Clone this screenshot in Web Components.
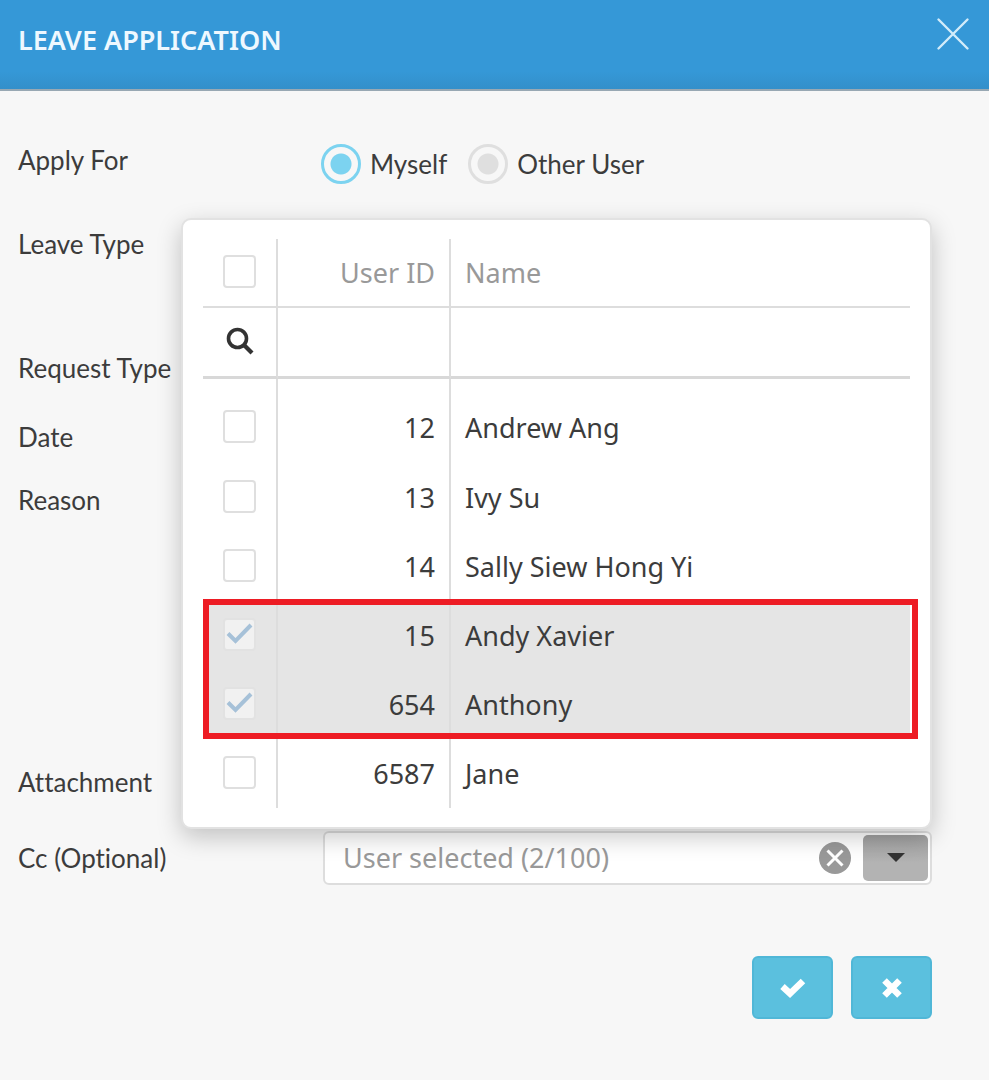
<!DOCTYPE html>
<html lang="en">
<head>
  <meta charset="UTF-8">
  <meta name="viewport" content="width=device-width, initial-scale=1.0">
  <title>Leave Application</title>
  <style>
    :root {
      --header: #3598d7;
      --page: #f7f7f7;
      --text: #3c3c3c;
      --muted: #999999;
      --line: #dddddd;
      --accent: #7cd3f0;
      --button: #5bc0de;
      --red: #ed1c24;
    }

    body {
      margin: 0;
      min-height: 100vh;
      background-color: var(--page);
      color: var(--text);
      font-family: Lato, "Liberation Sans", sans-serif;
      font-size: 26px;
      line-height: 32px;
      font-variant-ligatures: none;
    }
  </style>
</head>
<body>
  <leave-application></leave-application>

  <script>
    const define = (name, html, setup) => {
      const template = document.createElement("template");
      template.innerHTML = html;
      customElements.define(name, class extends HTMLElement {
        constructor() {
          super();
          this.attachShadow({ mode: "open" }).appendChild(template.content.cloneNode(true));
        }
        connectedCallback() {
          if (setup) setup(this, this.shadowRoot);
        }
      });
    };

    define("dialog-header", `
      <header>
        <h1><slot></slot></h1>
        <button type="button" aria-label="Close">
          <svg width="34" height="34" viewBox="0 0 34 34" fill="none" stroke="#d3ecfa" stroke-width="2.4" stroke-linecap="round">
            <path d="M2.500 2.500 31.500 31.500M31.500 2.500 2.500 31.500"/>
          </svg>
        </button>
      </header>
      <style>
        :host {
          display: block;
        }

        header {
          display: flex;
          justify-content: space-between;
          align-items: flex-start;
          box-sizing: border-box;
          min-height: 91px;
          padding: 17px 19px 0 18px;
          background: linear-gradient(to bottom, var(--header) 80%, #338fca);
          border-bottom: 2px solid #98a8b3;
        }

        h1 {
          margin: 7px 0 0;
          color: #eef8ff;
          font: 600 27px/32px "Noto Sans", sans-serif;
        }

        button {
          display: grid;
          padding: 0;
          border: 0;
          background: none;
          cursor: pointer;
        }
      </style>
    `);

    define("form-row", `
      <slot name="label"></slot>
      <div><slot></slot></div>
      <style>
        :host {
          display: grid;
          grid-template-columns: 305px 1fr;
          align-items: start;
        }

        :host([center]) {
          align-items: center;
        }
      </style>
    `);

    define("radio-option", `
      <label>
        <input type="radio">
        <slot></slot>
      </label>
      <style>
        :host {
          display: block;
        }

        label {
          display: flex;
          align-items: center;
          gap: 9px;
          cursor: pointer;
        }

        input {
          appearance: none;
          flex: none;
          width: 40px;
          height: 40px;
          margin: 0;
          border: 3px solid #dfdfdf;
          border-radius: 50%;
          background: radial-gradient(circle, #dfdfdf 10px, transparent 11px);
        }

        input:checked {
          border-color: var(--accent);
          background: radial-gradient(circle, var(--accent) 10px, transparent 11px);
        }
      </style>
    `, (host, root) => {
      root.querySelector("input").checked = host.hasAttribute("checked");
    });

    define("user-table", `
      <table>
        <thead>
          <tr>
            <th><input type="checkbox" aria-label="Select all"></th>
            <th>User ID</th>
            <th>Name</th>
          </tr>
          <tr class="filter">
            <td>
              <svg width="28" height="28" viewBox="0 0 28 28" fill="none" stroke="#333">
                <circle cx="11.500" cy="11.500" r="9" stroke-width="3.600"/>
                <path d="M18 18 26 26" stroke-width="4.200"/>
              </svg>
            </td>
            <td></td>
            <td></td>
          </tr>
        </thead>
        <tbody></tbody>
      </table>
      <div class="mark"></div>
      <style>
        :host {
          display: block;
          position: relative;
          font: 27px/32px "Noto Sans", sans-serif;
        }

        table {
          width: 100%;
          table-layout: fixed;
          border-collapse: separate;
          border-spacing: 0;
        }

        th,
        td {
          box-sizing: border-box;
          height: 69px;
          padding: 0 14px;
          text-align: left;
          font-weight: 400;
        }

        th:nth-child(1),
        td:nth-child(1) {
          width: 75px;
          padding: 0 0 2px;
          text-align: center;
          border-right: 2px solid var(--line);
        }

        th:nth-child(2),
        td:nth-child(2) {
          width: 173px;
          text-align: right;
          border-right: 2px solid var(--line);
        }

        th {
          color: var(--muted);
          border-bottom: 2px solid var(--line);
        }

        .filter td {
          height: 71px;
          border-bottom: 3px solid #d8d8d8;
        }

        svg {
          display: block;
          margin: 0 auto;
        }

        tbody tr:first-child td {
          height: 84px;
          padding-top: 14px;
        }

        tbody tr:first-child td:first-child {
          padding-top: 13px;
        }

        .selected {
          background-color: #e5e5e5;
        }

        input {
          appearance: none;
          display: block;
          box-sizing: border-box;
          width: 33px;
          height: 33px;
          margin: 0 auto;
          border: 2px solid #dfdfdf;
          border-radius: 4px;
          background-color: #fff;
        }

        input:checked {
          border-color: #e2e2e2;
          background: #f1f1f1 url("data:image/svg+xml,%3Csvg xmlns='http://www.w3.org/2000/svg' viewBox='0 0 29 29' fill='none' stroke='%23a6c1d8' stroke-width='4'%3E%3Cpath d='M3 13.500 10.500 21 26 5'/%3E%3C/svg%3E") center / 29px 29px no-repeat;
        }

        .mark {
          position: absolute;
          left: 0;
          right: -8px;
          bottom: 69px;
          height: 140px;
          box-sizing: border-box;
          border: 6px solid var(--red);
          pointer-events: none;
        }
      </style>
    `, (host, root) => {
      const users = [
        [12, "Andrew Ang"],
        [13, "Ivy Su"],
        [14, "Sally Siew Hong Yi"],
        [15, "Andy Xavier", true],
        [654, "Anthony", true],
        [6587, "Jane"]
      ];
      root.querySelector("tbody").innerHTML = users.map(([id, name, selected]) => `
        <tr class="${selected ? "selected" : ""}">
          <td><input type="checkbox" aria-label="${name}" ${selected ? "checked" : ""}></td>
          <td>${id}</td>
          <td>${name}</td>
        </tr>`).join("");
      root.querySelector("tbody").addEventListener("change", (event) => {
        event.target.closest("tr").classList.toggle("selected", event.target.checked);
      });
    });

    define("user-picker", `
      <slot></slot>
      <button type="button" class="clear" aria-label="Clear">
        <svg width="32" height="32" viewBox="0 0 32 32" fill="none">
          <circle cx="16" cy="16" r="16" fill="#999"/>
          <path d="M8.500 8.500 23.500 23.500M23.500 8.500 8.500 23.500" stroke="#fff" stroke-width="3"/>
        </svg>
      </button>
      <button type="button" class="toggle" aria-label="Show users">
        <svg width="18" height="10" viewBox="0 0 18 10"><path d="M0 0H18L9 9Z" fill="#333"/></svg>
      </button>
      <div class="popup"><user-table></user-table></div>
      <style>
        :host {
          display: flex;
          align-items: center;
          position: relative;
          box-sizing: border-box;
          height: 54px;
          padding: 2px;
          border: 2px solid var(--line);
          border-radius: 6px;
          background-color: #fff;
        }

        ::slotted(input) {
          flex: 1;
          min-width: 0;
          padding: 0 16px;
          border: 0;
          outline: 0;
          background: none;
          color: var(--muted);
          font: 27px/32px "Noto Sans", sans-serif;
        }

        button {
          display: grid;
          place-items: center;
          padding: 0;
          border: 0;
          background: none;
          cursor: pointer;
        }

        .clear {
          margin-right: 12px;
        }

        .toggle {
          width: 65px;
          height: 46px;
          border-radius: 5px;
          background: linear-gradient(to bottom, #a0a0a0, #b3b3b3 60%);
        }

        .popup {
          position: absolute;
          left: -144px;
          right: -2px;
          bottom: 54px;
          box-sizing: border-box;
          padding: 19px 20px;
          border: 2px solid #e2e2e2;
          border-radius: 10px;
          background-color: #fff;
          box-shadow: 0 8px 24px rgba(0, 0, 0, 0.22);
        }

        .popup[hidden] {
          display: none;
        }
      </style>
    `, (host, root) => {
      const popup = root.querySelector(".popup");
      root.querySelector(".toggle").addEventListener("click", () => {
        popup.hidden = !popup.hidden;
      });
    });

    define("leave-application", `
      <dialog-header>LEAVE APPLICATION</dialog-header>
      <form>
        <form-row class="apply">
          <span slot="label">Apply For</span>
          <div class="options" role="radiogroup" aria-label="Apply For">
            <radio-option checked>Myself</radio-option>
            <radio-option>Other User</radio-option>
          </div>
        </form-row>
        <form-row class="type"><span slot="label">Leave Type</span></form-row>
        <form-row class="request"><span slot="label">Request Type</span></form-row>
        <form-row class="date"><span slot="label">Date</span></form-row>
        <form-row class="reason"><span slot="label">Reason</span></form-row>
        <form-row class="attachment"><span slot="label">Attachment</span></form-row>
        <form-row center>
          <label slot="label" for="cc">Cc (Optional)</label>
          <user-picker><input type="text" id="cc" value="User selected (2/100)" readonly></user-picker>
        </form-row>
        <footer>
          <button type="submit" aria-label="Submit">
            <svg width="26" height="20" viewBox="0 0 26 20" fill="none" stroke="#fff" stroke-width="6.500">
              <path d="M2.500 8.500 10 15.500 23 3"/>
            </svg>
          </button>
          <button type="reset" aria-label="Cancel">
            <svg width="20" height="20" viewBox="0 0 20 20" fill="none" stroke="#fff" stroke-width="6.500">
              <path d="M2.500 2.500 17.500 17.500M17.500 2.500 2.500 17.500"/>
            </svg>
          </button>
        </footer>
      </form>
      <style>
        :host {
          display: block;
        }

        form {
          padding: 53px 57px 60px 18px;
        }

        .options {
          display: flex;
          gap: 21px;
          margin-left: -2px;
        }

        .apply {
          min-height: 84px;
        }

        .type {
          min-height: 124px;
        }

        .request {
          min-height: 69px;
        }

        .date {
          min-height: 63px;
        }

        .reason {
          min-height: 282px;
        }

        .attachment {
          min-height: 65px;
        }

        footer {
          display: flex;
          justify-content: flex-end;
          gap: 18px;
          margin-top: 71px;
        }

        button {
          display: grid;
          place-items: center;
          width: 81px;
          height: 63px;
          padding: 0;
          border: 2px solid #50b7d7;
          border-radius: 6px;
          background-color: var(--button);
          cursor: pointer;
        }
      </style>
    `, (host, root) => {
      const options = root.querySelectorAll("radio-option");
      options.forEach((option) => option.shadowRoot.querySelector("input").addEventListener("change", () => {
        options.forEach((other) => {
          other.shadowRoot.querySelector("input").checked = other === option;
        });
      }));
      root.querySelector("form").addEventListener("submit", (event) => event.preventDefault());
    });
  </script>
</body>
</html>
